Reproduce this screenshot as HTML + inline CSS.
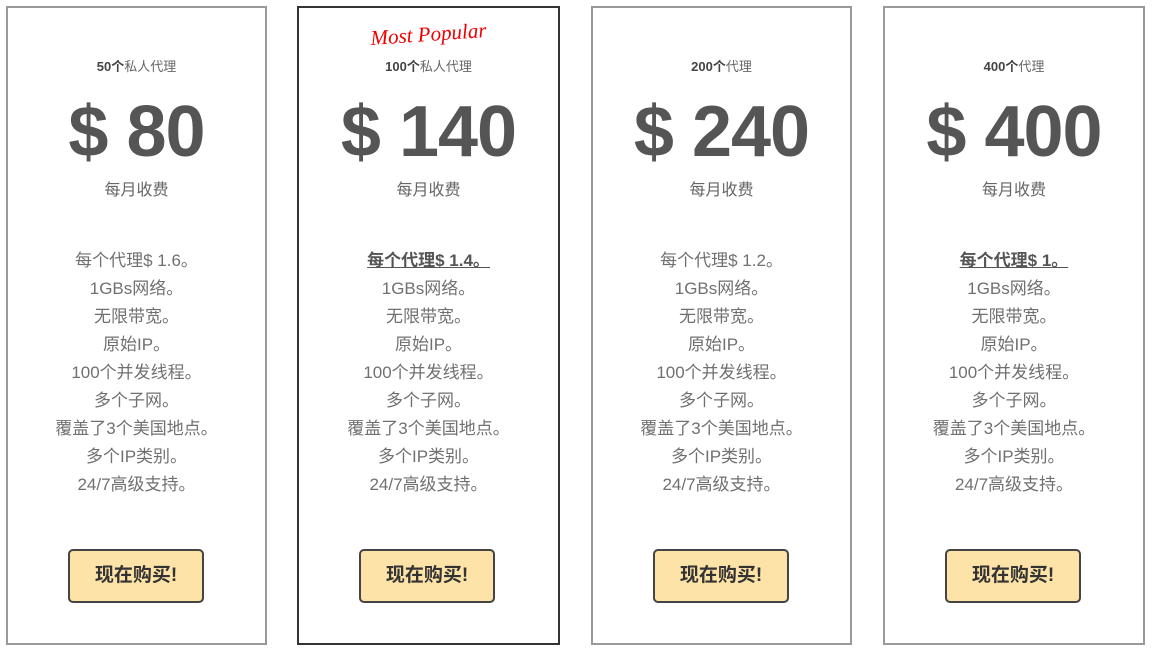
<!DOCTYPE html>
<html><head><meta charset="utf-8"><style>
body{margin:0;width:1154px;height:648px;background:#fff;font-family:"Liberation Sans","Noto Sans CJK SC",sans-serif;position:relative;overflow:hidden}
.card{position:absolute;top:6px;height:639px;box-sizing:border-box;border:2px solid #999;text-align:center;color:#666}
.card.pop{border-color:#333}
.t{position:absolute;top:48px;left:0;right:0;font-size:13px;color:#666}
.t b{color:#444}
.p{position:absolute;top:84px;left:0;right:0;font-size:72px;font-weight:bold;color:#555;line-height:80px;letter-spacing:-1px}
.m{position:absolute;top:168px;left:0;right:0;font-size:16px;color:#666}
.f{position:absolute;top:239px;left:0;right:0;font-size:17px;line-height:28px;color:#707070}
.f u{font-weight:bold;color:#555}
.btn{position:absolute;top:541px;left:60px;width:136px;height:54px;box-sizing:border-box;border:2px solid #444;border-radius:5px;background:#fde3a7;font-size:19px;font-weight:bold;color:#333;line-height:50px}
.mp{position:absolute;top:14px;left:0;right:0;font-family:"Liberation Serif",serif;font-style:italic;color:#e00;font-size:21px;transform:rotate(-4deg)}
</style></head><body>
<div class="card" style="left:6px;width:261px">
<div class="t"><b>50个</b>私人代理</div><div class="p">$ 80</div><div class="m">每月收费</div>
<div class="f">每个代理$ 1.6。<br>1GBs网络。<br>无限带宽。<br>原始IP。<br>100个并发线程。<br>多个子网。<br>覆盖了3个美国地点。<br>多个IP类别。<br>24/7高级支持。</div>
<div class="btn">现在购买!</div></div>
<div class="card pop" style="left:297px;width:263px">
<div class="mp">Most Popular</div>
<div class="t"><b>100个</b>私人代理</div><div class="p">$ 140</div><div class="m">每月收费</div>
<div class="f"><u>每个代理$ 1.4。 </u><br>1GBs网络。<br>无限带宽。<br>原始IP。<br>100个并发线程。<br>多个子网。<br>覆盖了3个美国地点。<br>多个IP类别。<br>24/7高级支持。</div>
<div class="btn">现在购买!</div></div>
<div class="card" style="left:591px;width:261px">
<div class="t"><b>200个</b>代理</div><div class="p">$ 240</div><div class="m">每月收费</div>
<div class="f">每个代理$ 1.2。<br>1GBs网络。<br>无限带宽。<br>原始IP。<br>100个并发线程。<br>多个子网。<br>覆盖了3个美国地点。<br>多个IP类别。<br>24/7高级支持。</div>
<div class="btn">现在购买!</div></div>
<div class="card" style="left:883px;width:262px">
<div class="t"><b>400个</b>代理</div><div class="p">$ 400</div><div class="m">每月收费</div>
<div class="f"><u>每个代理$ 1。 </u><br>1GBs网络。<br>无限带宽。<br>原始IP。<br>100个并发线程。<br>多个子网。<br>覆盖了3个美国地点。<br>多个IP类别。<br>24/7高级支持。</div>
<div class="btn">现在购买!</div></div>
</body></html>
